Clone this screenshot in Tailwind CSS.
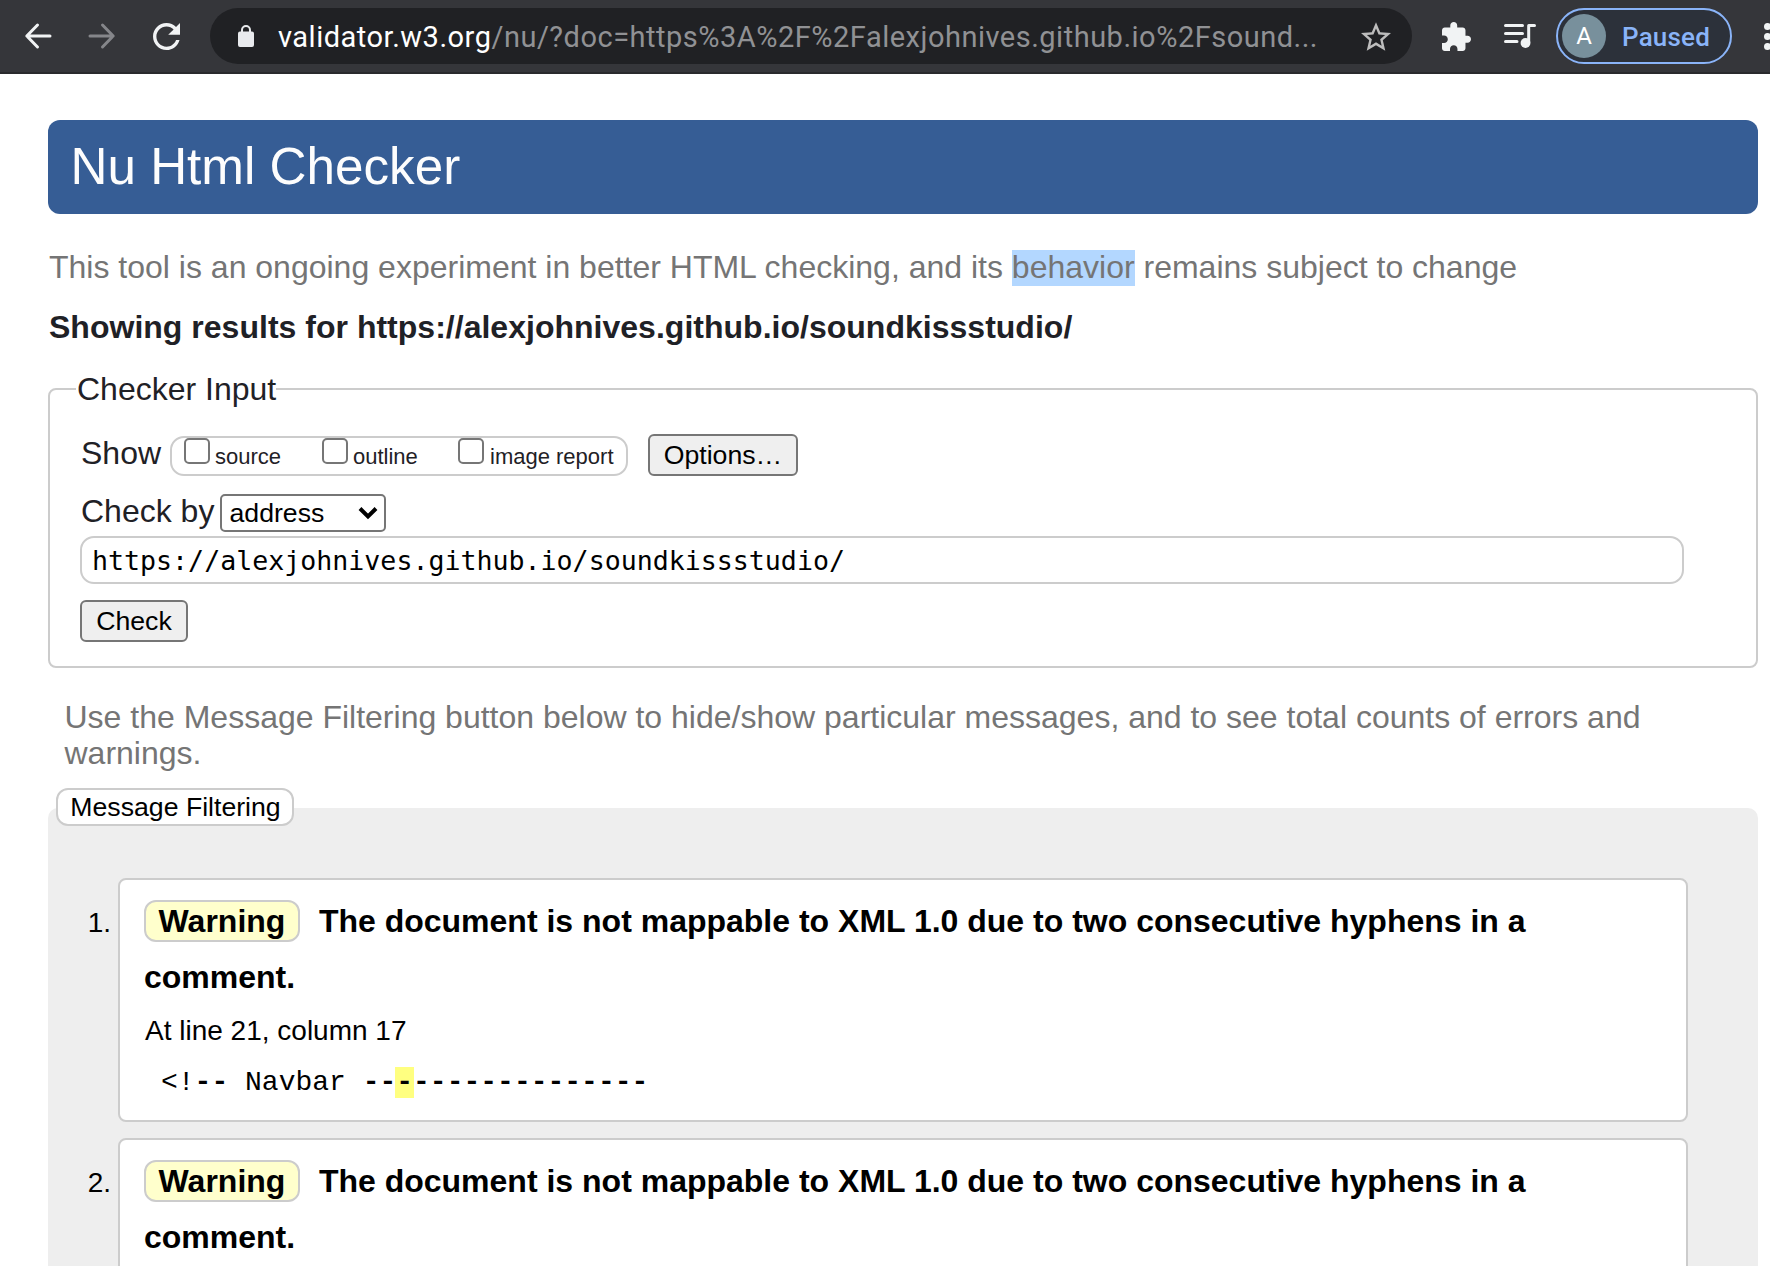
<!DOCTYPE html>
<html lang="en">
<head>
<meta charset="utf-8">
<title>Nu Html Checker</title>
<script src="https://cdn.jsdelivr.net/npm/@tailwindcss/browser@4"></script>
</head>
<body class="w-[1770px] h-[1266px] overflow-hidden bg-white text-[#1f2126] font-['Liberation_Sans',Arial,sans-serif]">

<!-- Browser toolbar -->
<header class="flex h-[74px] items-center overflow-hidden border-b-2 border-[#292a2d] bg-[#35363a] font-[Roboto,sans-serif]">
  <svg class="ml-6 h-7 w-7 shrink-0" viewBox="0 0 28 28" fill="none" stroke="#f1f3f4" stroke-width="3" stroke-linecap="round" stroke-linejoin="round"><path d="M26 14H3M13.5 3L2.8 14l10.7 11"/></svg>
  <svg class="ml-9 h-7 w-7 shrink-0" viewBox="0 0 28 28" fill="none" stroke="#85868a" stroke-width="3" stroke-linecap="round" stroke-linejoin="round"><path d="M2 14h23M14.500 3l10.700 11-10.700 11"/></svg>
  <svg class="ml-[37px] h-[27px] w-[27px] shrink-0" viewBox="4 4 16 16" fill="#f1f3f4"><path d="M17.65 6.350C16.200 4.900 14.210 4 12 4c-4.420 0-7.990 3.580-7.990 8s3.570 8 7.990 8c3.730 0 6.840-2.550 7.730-6h-2.080c-.82 2.330-3.040 4-5.650 4-3.310 0-6-2.690-6-6s2.690-6 6-6c1.660 0 3.140.69 4.220 1.780L13 11h7V4l-2.350 2.350z"/></svg>
  <div class="ml-[30px] flex h-14 w-[1202px] shrink-0 items-center rounded-full bg-[#202124] pl-7">
    <svg class="h-[22px] w-4 shrink-0" viewBox="0 0 16 22" fill="#e8eaed"><path d="M2 6.500h12a2 2 0 0 1 2 2V20a2 2 0 0 1-2 2H2a2 2 0 0 1-2-2V8.500a2 2 0 0 1 2-2z"/><path d="M4 8V5a4 4 0 0 1 8 0v3" fill="none" stroke="#e8eaed" stroke-width="2"/></svg>
    <div class="ml-6 w-[1083px] shrink-0 whitespace-nowrap pt-px text-[29px] leading-[36px] tracking-[0.5px] text-[#909194]"><span class="text-white">validator.w3.org</span>/nu/?doc=https%3A%2F%2Falexjohnives.github.io%2Fsound...</div>
    <svg class="h-[29px] w-[30px] shrink-0" viewBox="2 2 20 19" fill="#bdbdbd"><path d="M22 9.240l-7.190-.62L12 2 9.190 8.630 2 9.240l5.460 4.730L5.820 21 12 17.270 18.180 21l-1.630-7.030L22 9.240zM12 15.400l-3.760 2.270 1-4.280-3.320-2.880 4.380-.38L12 6.100l1.710 4.040 4.380.38-3.320 2.880 1 4.280L12 15.400z"/></svg>
  </div>
  <svg class="ml-[30px] h-[29px] w-[29px] shrink-0" viewBox="2 1 21 21" fill="#f1f3f4"><path d="M20.500 11H19V7c0-1.100-.9-2-2-2h-4V3.500C13 2.120 11.880 1 10.500 1S8 2.120 8 3.500V5H4c-1.100 0-1.990.9-1.990 2v3.800H3.500c1.490 0 2.700 1.210 2.700 2.700s-1.210 2.700-2.700 2.700H2V20c0 1.100.9 2 2 2h3.800v-1.500c0-1.490 1.210-2.700 2.700-2.700 1.490 0 2.700 1.210 2.700 2.700V22H17c1.100 0 2-.9 2-2v-4h1.500c1.380 0 2.500-1.120 2.500-2.500S21.880 11 20.500 11z"/></svg>
  <svg class="ml-8 h-6 w-[33px] shrink-0" viewBox="0 0 33 24" fill="none" stroke="#f1f3f4" stroke-width="3" stroke-linecap="round" stroke-linejoin="round"><path d="M2.500 1.500h17M2.500 9.500h17M2.500 17.500h11.500M25.700 19V1.500H31.500"/><circle cx="22.500" cy="19" r="4.900" fill="#f1f3f4" stroke="none"/></svg>
  <div class="ml-5 flex h-14 w-44 shrink-0 items-center rounded-full border-2 border-[#8ab4f8] bg-[#2c313a] pl-1">
    <div class="flex h-11 w-11 items-center justify-center rounded-full bg-[#78909c] text-[24px] text-white">A</div>
    <div class="ml-4 pt-px text-[26px] leading-[36px] font-medium tracking-[0.2px] text-[#8ab4f8]">Paused</div>
  </div>
  <div class="ml-8 flex shrink-0 flex-col gap-[3px]">
    <span class="h-[7px] w-[7px] rounded-full bg-[#f1f3f4]"></span>
    <span class="h-[7px] w-[7px] rounded-full bg-[#f1f3f4]"></span>
    <span class="h-[7px] w-[7px] rounded-full bg-[#f1f3f4]"></span>
  </div>
</header>

<main class="ml-12 w-[1710px] pt-[46px]">
  <h1 class="h-[94px] rounded-xl bg-[#365d95] pl-[22.5px] text-[51.2px] leading-[93px] text-[#fdfdfd]">Nu Html Checker</h1>

  <p class="mt-[35px] h-9 pl-px whitespace-nowrap text-[32px] leading-[36px] text-[#757575]">This tool is an ongoing experiment in better HTML checking, and its <span class="inline-block h-9 bg-[#b3d7ff] leading-[34px]">behavior</span> remains subject to change</p>
  <h2 class="mt-6 h-9 pl-px whitespace-nowrap text-[32px] leading-[36px] font-bold tracking-[0.015px]">Showing results for https://alexjohnives.github.io/soundkissstudio/</h2>

  <!-- Checker form -->
  <fieldset class="mt-[26px] rounded-lg border-2 border-[#ccc] px-[30px] pb-6">
    <legend class="-ml-1 h-9 pl-px text-[32px] leading-[36px]">Checker Input</legend>
    <div class="flex items-start pt-[27px]">
      <span class="w-[90px] pl-px text-[32px] leading-[38px]">Show</span>
      <div class="mt-0.5 flex h-10 w-[458px] items-start rounded-[14px] border-2 border-[#ccc] pl-3 text-[22px] leading-[38px]">
        <label class="flex w-[138px]"><span class="mr-[5px] h-[26px] w-[26px] rounded-[5px] border-2 border-[#767676] bg-white"></span>source</label>
        <label class="flex w-[136px]"><span class="mr-[5px] h-[26px] w-[26px] rounded-[5px] border-2 border-[#767676] bg-white"></span>outline</label>
        <label class="flex whitespace-nowrap"><span class="mr-1.5 h-[26px] w-[26px] rounded-[5px] border-2 border-[#767676] bg-white"></span>image report</label>
      </div>
      <button class="ml-5 h-[42px] w-[150px] rounded-md border-2 border-[#767676] bg-[#efefef] text-[26.67px] leading-[38px] text-black">Options…</button>
    </div>
    <div class="mt-[18px] flex items-start">
      <span class="w-[140px] pl-px text-[32px] leading-[34px]">Check by</span>
      <div class="flex h-[38px] w-[166px] items-center justify-between rounded-[5px] border-2 border-[#767676] bg-white pr-1.5 pl-[7.5px] text-[26.67px] leading-[34px] text-black">address
        <svg class="h-[14px] w-5" viewBox="0 0 20 14" fill="none" stroke="#000" stroke-width="4"><path d="M2 2.500l8 8 8-8"/></svg>
      </div>
    </div>
    <div class="mt-1 h-12 w-[1604px] rounded-[14px] border-2 border-[#ccc] pl-2.5 font-['DejaVu_Sans_Mono',monospace] text-[26.62px] leading-[46px] text-black">https://alexjohnives.github.io/soundkissstudio/</div>
    <button class="mt-4 block h-[42px] w-[108px] rounded-md border-2 border-[#767676] bg-[#efefef] text-[26.67px] leading-[38px] text-black">Check</button>
  </fieldset>

  <p class="mt-[31px] pl-[16.5px] text-[32px] leading-[36px] text-[#757575]">Use the Message Filtering button below to hide/show particular messages, and to see total counts of errors and warnings.</p>

  <!-- Results -->
  <button class="relative z-10 mt-[17px] -mb-[18px] ml-2 block h-[38px] w-[238px] rounded-xl border-2 border-[#ccc] bg-white pl-px text-[26.67px] leading-[34px] text-black">Message Filtering</button>
  <ol class="flex h-[458px] flex-col gap-4 overflow-hidden rounded-t-[10px] bg-[#eee] pt-[70px] text-black">
    <li class="flex h-[244px] shrink-0">
      <span class="w-[70px] pt-[17px] pr-[7px] text-right text-[28px] leading-[56px]">1.</span>
      <div class="w-[1570px] rounded-lg border-2 border-[#ccc] bg-white px-6 pt-[13px]">
        <p class="text-[32px] leading-[56px] font-bold"><span class="mr-[10px] inline-block h-[42px] w-[156px] rounded-xl border-2 border-[#ccc] bg-[#ffffcc] text-center leading-[38px]">Warning</span> The document is not mappable to XML 1.0 due to two consecutive hyphens in a<br>comment.</p>
        <p class="mt-2.5 pl-px text-[28px] leading-[32px]">At line 21, column 17</p>
        <p class="mt-5 pl-[17px] font-['Liberation_Mono',monospace] text-[28px] leading-[32px] whitespace-pre">&lt;!<span class="font-bold">--</span> Navbar <span class="font-bold">--<span class="-mx-px bg-[#ffff80] px-px">-</span>--------------</span></p>
      </div>
    </li>
    <li class="flex h-[244px] shrink-0">
      <span class="w-[70px] pt-[17px] pr-[7px] text-right text-[28px] leading-[56px]">2.</span>
      <div class="h-[244px] w-[1570px] rounded-lg border-2 border-[#ccc] bg-white px-6 pt-[13px]">
        <p class="text-[32px] leading-[56px] font-bold"><span class="mr-[10px] inline-block h-[42px] w-[156px] rounded-xl border-2 border-[#ccc] bg-[#ffffcc] text-center leading-[38px]">Warning</span> The document is not mappable to XML 1.0 due to two consecutive hyphens in a<br>comment.</p>
      </div>
    </li>
  </ol>
</main>
</body>
</html>
